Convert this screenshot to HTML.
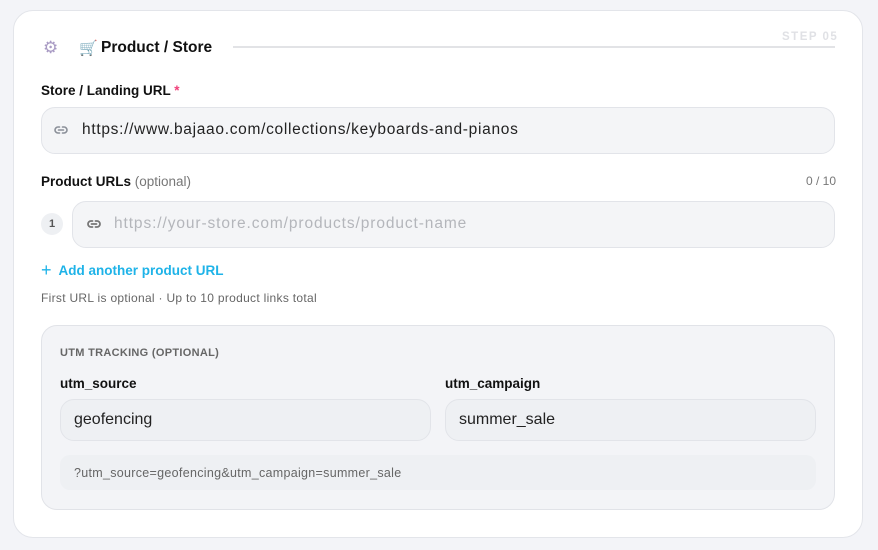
<!DOCTYPE html><html><head><style>
*{box-sizing:border-box;margin:0;padding:0}
body{width:878px;height:550px;background:#f3f4f8;font-family:"Liberation Sans",sans-serif;position:relative;overflow:hidden;color:#111}
.card{position:absolute;left:13px;top:10px;width:850px;height:528px;background:#fff;border:1px solid #e3e5ea;border-radius:20px}
.a{position:absolute}
.inp{position:absolute;background:#f4f5f7;border:1px solid #e2e4e9;border-radius:14px}
.lbl{font-weight:bold;font-size:13.5px}
</style></head><body>
<div class="card"></div>
<div class="a" style="left:43px;top:38px;font-size:17px;color:#a99bc4">⚙</div>
<div class="a" style="left:79px;top:39px;font-size:15px;color:#7a8aa8">🛒</div>
<div class="a" style="left:101px;top:39px;font-size:15.5px;font-weight:bold">Product / Store</div>
<div class="a" style="left:233px;top:46px;width:602px;height:2px;background:#e2e3e6"></div>
<div class="a" style="left:782px;top:31px;font-size:11.5px;font-weight:bold;color:#e0e1e5;letter-spacing:1.5px">STEP 05</div>
<div class="a lbl" style="left:41px;top:83px">Store / Landing URL <span style="color:#f0407a">*</span></div>
<div class="inp" style="left:41px;top:107px;width:794px;height:47px"></div>
<svg class="a" style="left:53px;top:122px" width="16" height="16" viewBox="0 0 16 16" fill="none" stroke="#8a8f98" stroke-width="1.6" stroke-linecap="round"><path d="M6.5 5H5a3 3 0 0 0 0 6h1.5M9.5 5H11a3 3 0 0 1 0 6H9.5M5.5 8h5"/></svg>
<div class="a" style="left:82px;top:121px;font-size:15.5px;color:#222;letter-spacing:0.7px">https://www.bajaao.com/collections/keyboards-and-pianos</div>
<div class="a lbl" style="left:41px;top:174px">Product URLs <span style="font-weight:normal;color:#777">(optional)</span></div>
<div class="a" style="left:806px;top:174px;font-size:12px;color:#777">0 / 10</div>
<div class="a" style="left:41px;top:213px;width:22px;height:22px;border-radius:11px;background:#eef0f3;font-size:11px;font-weight:bold;color:#555;text-align:center;line-height:22px">1</div>
<div class="inp" style="left:72px;top:201px;width:763px;height:47px"></div>
<svg class="a" style="left:86px;top:216px" width="16" height="16" viewBox="0 0 16 16" fill="none" stroke="#777" stroke-width="1.8" stroke-linecap="round"><path d="M6.5 5H5a3 3 0 0 0 0 6h1.5M9.5 5H11a3 3 0 0 1 0 6H9.5M5.5 8h5"/></svg>
<div class="a" style="left:114px;top:215px;font-size:15.5px;color:#b4b6bb;letter-spacing:0.9px">https://your-store.com/products/product-name</div>
<div class="a" style="left:41px;top:259px;font-size:13.5px;font-weight:bold;color:#1eb3e8"><span style="font-size:18px;font-weight:normal;position:relative;top:1px">+</span>&nbsp; Add another product URL</div>
<div class="a" style="left:41px;top:291px;font-size:12px;color:#666;letter-spacing:0.3px">First URL is optional · Up to 10 product links total</div>
<div class="a" style="left:41px;top:325px;width:794px;height:185px;background:#f3f4f7;border:1px solid #e1e3e8;border-radius:16px"></div>
<div class="a" style="left:60px;top:347px;font-size:11px;font-weight:bold;color:#666;letter-spacing:.3px">UTM TRACKING (OPTIONAL)</div>
<div class="a lbl" style="left:60px;top:376px">utm_source</div>
<div class="a lbl" style="left:445px;top:376px">utm_campaign</div>
<div class="inp" style="left:60px;top:399px;width:371px;height:42px;background:#eef0f3"></div>
<div class="inp" style="left:445px;top:399px;width:371px;height:42px;background:#eef0f3"></div>
<div class="a" style="left:74px;top:411px;font-size:16px;color:#222">geofencing</div>
<div class="a" style="left:459px;top:411px;font-size:16px;color:#222">summer_sale</div>
<div class="a" style="left:60px;top:455px;width:756px;height:35px;background:#eef0f3;border-radius:10px"></div>
<div class="a" style="left:74px;top:466px;font-size:12.5px;color:#666;letter-spacing:0.3px">?utm_source=geofencing&amp;utm_campaign=summer_sale</div>
</body></html>
